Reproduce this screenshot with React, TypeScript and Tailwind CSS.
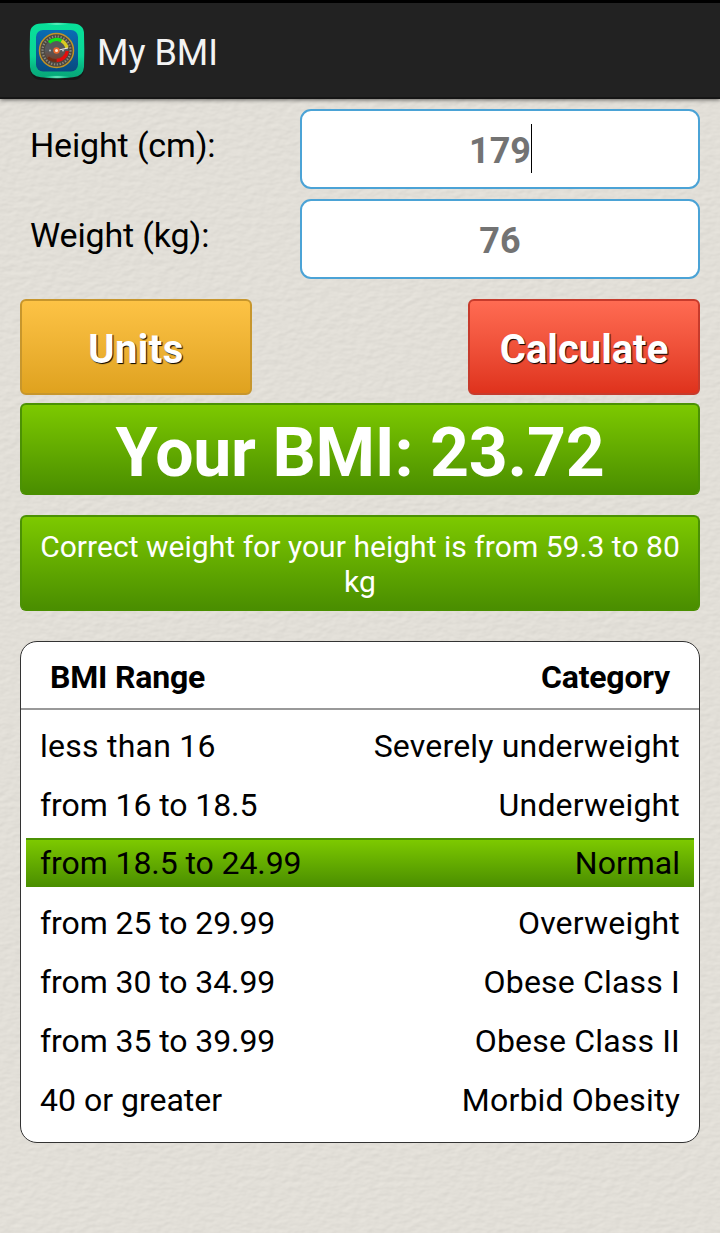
import clsx from "clsx";

const ranges = [
  { range: "less than 16", category: "Severely underweight" },
  { range: "from 16 to 18.5", category: "Underweight" },
  { range: "from 18.5 to 24.99", category: "Normal", active: true },
  { range: "from 25 to 29.99", category: "Overweight" },
  { range: "from 30 to 34.99", category: "Obese Class I" },
  { range: "from 35 to 39.99", category: "Obese Class II" },
  { range: "40 or greater", category: "Morbid Obesity" },
];

function Logo() {
  return (
    <svg width="60" height="60" viewBox="0 0 60 60">
      <defs>
        <linearGradient id="frame" x1="0" y1="0" x2="0" y2="1">
          <stop offset="0" stopColor="#08e09a" />
          <stop offset="0.6" stopColor="#0bd696" />
          <stop offset="0.8" stopColor="#08b582" />
          <stop offset="1" stopColor="#07a678" />
        </linearGradient>
        <radialGradient id="shine">
          <stop offset="0" stopColor="#a5ffe0" />
          <stop offset="1" stopColor="#0bd696" stopOpacity="0" />
        </radialGradient>
        <linearGradient id="panel" x1="0" y1="0" x2="0" y2="1">
          <stop offset="0" stopColor="#0a6cb4" />
          <stop offset="1" stopColor="#084b80" />
        </linearGradient>
        <linearGradient id="dial" x1="0" y1="0" x2="0" y2="1">
          <stop offset="0.5" stopColor="#55595c" />
          <stop offset="1" stopColor="#7b3a20" />
        </linearGradient>
      </defs>
      <rect x="3" y="4" width="54" height="56" rx="11" fill="#111" opacity="0.6" />
      <path
        d="M14 3.500Q30 1.800 46 3.500Q57 4 57 14Q57.600 30 57 47Q56.500 56.500 46 57.200Q30 59.500 14 57.200Q3.500 56.500 3 47Q2.400 30 3 14Q3 4 14 3.500Z"
        fill="url(#frame)"
      />
      <ellipse cx="30" cy="57" rx="14" ry="1.800" fill="url(#shine)" />
      <ellipse cx="30" cy="4" rx="14" ry="1.500" fill="url(#shine)" />
      <rect x="9" y="10" width="42" height="41.500" rx="7" fill="url(#panel)" />
      <circle cx="29.500" cy="30.500" r="17" fill="#4b4740" stroke="#c09428" strokeWidth="1.500" />
      <circle
        cx="29.500"
        cy="30.500"
        r="14"
        fill="none"
        stroke="#8d8a82"
        strokeWidth="2.200"
        strokeDasharray="1.300 1.600"
      />
      <circle cx="29.500" cy="30.500" r="11.800" fill="url(#dial)" />
      <path d="M22 22.500A11 11 0 0 1 34.500 20.800" fill="none" stroke="#0be51a" strokeWidth="3.400" />
      <path d="M34.500 20.800A11 11 0 0 1 40 28" fill="none" stroke="#d9cc20" strokeWidth="3.400" />
      <path d="M40.300 31A11 11 0 0 1 29.500 40.500" fill="none" stroke="#e30c0c" strokeWidth="3.400" />
      <path d="M29.500 40.500A11 11 0 0 1 21 37.500" fill="none" stroke="#702c14" strokeWidth="3" />
      <path d="M29.500 30.500L41 28" stroke="#e6e6e6" strokeWidth="1.200" />
      <circle cx="23" cy="30.500" r="1" fill="#b9bdc0" />
      <circle cx="36" cy="30.500" r="1" fill="#b9bdc0" />
      <circle cx="29.500" cy="30.500" r="3.200" fill="#e8672c" />
      <circle cx="29.500" cy="30.500" r="1.500" fill="#ffe8d8" />
    </svg>
  );
}

// embossed paper grain behind the whole screen
function PaperTexture() {
  return (
    <svg className="absolute inset-0 -z-10 h-full w-full">
      <filter id="paper" x="0" y="0" width="100%" height="100%" colorInterpolationFilters="sRGB">
        <feTurbulence type="fractalNoise" baseFrequency="0.11 0.19" numOctaves="2" seed="4" />
        <feDiffuseLighting lightingColor="#e2dfd8" surfaceScale="0.4" diffuseConstant="1.133">
          <feDistantLight azimuth="235" elevation="62" />
        </feDiffuseLighting>
      </filter>
      <rect width="100%" height="100%" filter="url(#paper)" opacity="0.4" />
    </svg>
  );
}

interface FieldProps {
  label: string;
  value: string;
  focused?: boolean;
}

function Field({ label, value, focused }: FieldProps) {
  return (
    <div className="flex h-20 items-center justify-between pl-2.5">
      <label className="pb-2 text-[34px] leading-10 tracking-[-0.15px]">{label}</label>
      <div className="flex h-20 w-[400px] items-center justify-center rounded-[11px] border-2 border-[#4ba3d6] bg-white text-4xl font-bold text-[#737373]">
        <span className="relative pt-1">
          {value}
          {focused && <span className="absolute -right-px -top-[3px] h-[49px] w-px bg-black" />}
        </span>
      </div>
    </div>
  );
}

export default function App() {
  return (
    <div className="relative isolate flex h-[1233px] w-[720px] flex-col overflow-hidden bg-[#e2dfd8] font-[Roboto,sans-serif] text-black">
      <PaperTexture />
      <header className="flex h-[99px] shrink-0 items-center gap-2.5 border-b-2 border-t-[3px] border-b-[#161616] border-t-black bg-[#222] pl-[27px] shadow-[0_1px_4px_rgba(0,0,0,0.55)]">
        <Logo />
        <h1 className="pt-1.5 text-4xl text-[#f3f3f3]">My BMI</h1>
      </header>

      <main className="flex flex-col px-5 pt-2.5">
        <div className="flex flex-col gap-2.5">
          <Field label="Height (cm):" value="179" focused />
          <Field label="Weight (kg):" value="76" />
        </div>

        <div className="mt-5 flex justify-between">
          <button className="h-24 w-[232px] rounded-md border-2 border-[#c7962c] bg-linear-to-b from-[#fdc345] to-[#dfa21e] pt-1.5 text-[40px] font-bold tracking-[0.4px] text-white [text-shadow:1px_1px_1px_#000]">
            Units
          </button>
          <button className="h-24 w-[232px] rounded-md border-2 border-[#c73b2c] bg-linear-to-b from-[#ff6b52] to-[#df321c] pt-1.5 text-[40px] font-bold text-white [text-shadow:1px_1px_1px_#000]">
            Calculate
          </button>
        </div>

        <div className="mt-2 flex h-[92px] items-center justify-center rounded-md border-2 border-[#4b9104] border-b-[#4a8f00] bg-linear-to-b from-[#7dc900] to-[#4a8e00] pt-2 text-[68px] font-bold leading-none tracking-[-0.25px] text-white">
          Your BMI: 23.72
        </div>
        <div className="mt-5 h-24 rounded-md border-2 border-[#4b9104] border-b-[#4a8f00] bg-linear-to-b from-[#7dc900] to-[#4a8e00] px-4 pt-3 text-center text-[30px] leading-[35px] tracking-[0.04px] text-white">
          Correct weight for your height is from 59.3 to 80 kg
        </div>

        <section className="mt-[30px] h-[502px] rounded-[17px] border border-[#333] bg-white">
          <div className="flex h-[68px] items-center justify-between border-b-2 border-[#999] px-[29px] pt-1 text-[32px] font-bold tracking-[-0.2px]">
            <span>BMI Range</span>
            <span>Category</span>
          </div>
          <div className="flex flex-col gap-2.5 px-[5px] pt-2.5">
            {ranges.map(({ range, category, active }) => (
              <div
                key={range}
                className={clsx(
                  "group flex h-[49px] items-center justify-between px-3.5 text-[32px]",
                  active
                    ? "border-t-2 border-[#4b9104] bg-linear-to-b from-[#7dc900] to-[#4a8e00] pb-px"
                    : "pt-0.5"
                )}
              >
                <span className="tracking-[-0.08px] group-first:tracking-[0.25px] group-last:tracking-normal">
                  {range}
                </span>
                <span className={active ? "" : "tracking-[0.18px]"}>{category}</span>
              </div>
            ))}
          </div>
        </section>
      </main>
    </div>
  );
}
